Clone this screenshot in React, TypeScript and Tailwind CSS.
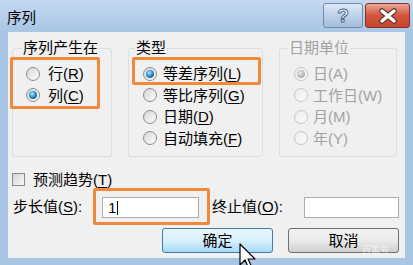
import React from 'react';

const font = "font-['Liberation_Sans','Noto_Sans_CJK_SC',sans-serif]";

function Radio({ checked, disabled }: { checked?: boolean; disabled?: boolean }) {
  return (
    <span
      className={
        disabled
          ? 'w-[14px] h-[14px] rounded-full border border-[#c6c6c6] bg-linear-to-br from-[#ececec] to-[#fbfbfb] flex items-center justify-center shrink-0'
          : 'w-[14px] h-[14px] rounded-full border border-[#8b8b8b] bg-linear-to-br from-[#d6d6d6] to-[#fdfdfd] flex items-center justify-center shrink-0'
      }
    >
      {checked && (
        <span
          className={
            disabled
              ? 'w-[8px] h-[8px] rounded-full bg-[radial-gradient(circle_at_40%_35%,#e8e8e8_0%,#b4b4b4_60%,#9a9a9a_100%)]'
              : 'w-[8px] h-[8px] rounded-full bg-[radial-gradient(circle_at_40%_35%,#b8e8ff_0%,#2c92d6_45%,#0a3a66_100%)]'
          }
        />
      )}
    </span>
  );
}

function Label({ text, k, disabled }: { text: string; k: string; disabled?: boolean }) {
  return (
    <span className={disabled ? 'text-[#a2a2a2] leading-none' : 'text-black leading-none'}>
      {text}(
      {disabled ? k : <span className="underline underline-offset-2">{k}</span>})
    </span>
  );
}

function Group({ title, titleLeft, width, pl, children }: {
  title: string; titleLeft: string; width: string; pl: string; children: React.ReactNode;
}) {
  return (
    <div className={`relative h-[109px] border border-[#d5dfe5] rounded-[3px] pt-[14px] ${width} ${pl}`}>
      <span className={`absolute -top-[10px] ${titleLeft} px-[1px] bg-[#f0f0f0] leading-[18px] ${title === '日期单位' ? 'text-[#a2a2a2]' : 'text-black'}`}>
        {title}
      </span>
      <div className="flex flex-col">{children}</div>
    </div>
  );
}

function Row({ children, gap }: { children: React.ReactNode; gap: string }) {
  return <div className={`h-[21.5px] flex items-center ${gap}`}>{children}</div>;
}

export default function App() {
  return (
    <div className={`relative w-[413px] h-[265px] bg-[#a9c5e4] flex flex-col text-[15px] ${font}`}>
      {/* 标题栏 */}
      <div className="h-[32px] flex items-start bg-linear-to-b from-[#c4d9f0] to-[#a9c5e5]">
        <span className="ml-[7px] mt-[9px] text-[14.5px] leading-[18px] text-black">序列</span>
        <div className="ml-auto mr-[3px] mt-[3px] flex gap-[2px]">
          <button className="w-[40px] h-[25px] rounded-[3px] border border-[#6f8bab] bg-linear-to-b from-[#dde9f6] via-[#bdd1e8] to-[#a5bedd] flex items-center justify-center">
            <span className="text-white font-bold text-[19px] leading-none [-webkit-text-stroke:1px_#4a6790]">?</span>
          </button>
          <button className="w-[45px] h-[25px] rounded-[3px] border border-[#8a2f22] bg-linear-to-b from-[#e9a596] via-[#d0563f] to-[#c4432c] flex items-center justify-center">
            <svg width="20" height="16" viewBox="0 0 20 16">
              <path d="M4 3 L16 13 M16 3 L4 13" stroke="#5a2a22" strokeWidth="5.5" strokeLinecap="round" />
              <path d="M4 3 L16 13 M16 3 L4 13" stroke="#ffffff" strokeWidth="3.5" strokeLinecap="round" />
            </svg>
          </button>
        </div>
      </div>

      {/* 客户区 */}
      <div className="mx-[8px] h-[226px] bg-[#f0f0f0] flex flex-col pl-[4px] pr-[6px]">
        <div className="mt-[16px] flex gap-[16px]">
          <Group title="序列产生在" titleLeft="left-[9px]" width="w-[100px]" pl="pl-[13px]">
            <Row gap="gap-[8px]"><Radio /><Label text="行" k="R" /></Row>
            <Row gap="gap-[8px]"><Radio checked /><Label text="列" k="C" /></Row>
          </Group>
          <Group title="类型" titleLeft="left-[6px]" width="w-[135px]" pl="pl-[14px]">
            <Row gap="gap-[6px]"><Radio checked /><Label text="等差序列" k="L" /></Row>
            <Row gap="gap-[6px]"><Radio /><Label text="等比序列" k="G" /></Row>
            <Row gap="gap-[6px]"><Radio /><Label text="日期" k="D" /></Row>
            <Row gap="gap-[6px]"><Radio /><Label text="自动填充" k="F" /></Row>
          </Group>
          <Group title="日期单位" titleLeft="left-[8px]" width="w-[118px]" pl="pl-[14px]">
            <Row gap="gap-[5px]"><Radio checked disabled /><Label text="日" k="A" disabled /></Row>
            <Row gap="gap-[5px]"><Radio disabled /><Label text="工作日" k="W" disabled /></Row>
            <Row gap="gap-[5px]"><Radio disabled /><Label text="月" k="M" disabled /></Row>
            <Row gap="gap-[5px]"><Radio disabled /><Label text="年" k="Y" disabled /></Row>
          </Group>
        </div>

        {/* 预测趋势 */}
        <div className="mt-[16px] h-[13px] flex items-center gap-[8px]">
          <span className="w-[13px] h-[13px] border border-[#8b8b8b] bg-linear-to-br from-[#d4d4d4] to-[#f8f8f8] shrink-0" />
          <Label text="预测趋势" k="T" />
        </div>

        {/* 步长值 / 终止值 */}
        <div className="mt-[11px] h-[21px] flex items-center">
          <span className="w-[90px] pl-[1px]"><Label text="步长值" k="S" />:</span>
          <div className="w-[97px] h-[21px] border border-[#abadb3] bg-white flex items-center pl-[5px]">
            <span className="leading-none text-black">1</span>
            <span className="w-[1px] h-[14px] bg-black ml-[1px]" />
          </div>
          <span className="ml-[13px] w-[92px]"><Label text="终止值" k="O" />:</span>
          <div className="w-[95px] h-[21px] border border-[#abadb3] bg-white" />
        </div>

        {/* 按钮 */}
        <div className="mt-[10px] flex justify-end gap-[15px]">
          <button className="w-[111px] h-[25px] rounded-[3px] border border-[#3c7fb1] bg-linear-to-b from-[#eaf6fd] via-[#d9f0fc] to-[#a7d9f5] leading-none text-black">
            确定
          </button>
          <button className="w-[111px] h-[25px] rounded-[3px] border border-[#707070] bg-linear-to-b from-[#f2f2f2] via-[#ebebeb] to-[#cfcfcf] leading-none text-black">
            取消
          </button>
        </div>
      </div>

      {/* 橙色标注框 */}
      <div className="absolute left-[10px] top-[57px] w-[90px] h-[52px] border-[3px] border-[#f0893c] rounded-[2px]" />
      <div className="absolute left-[132px] top-[57px] w-[129px] h-[28px] border-[3px] border-[#f0893c] rounded-[2px]" />
      <div className="absolute left-[93px] top-[188px] w-[117px] h-[37px] border-[3px] border-[#f0893c] rounded-[2px]" />

      {/* 水印 */}
      <span className="absolute left-[362px] top-[246px] text-[9px] leading-none text-white/70">百家号</span>

      {/* 鼠标指针 */}
      <svg className="absolute left-[239px] top-[243px]" width="18" height="27" viewBox="0 0 18 27">
        <path d="M1 1 L1 22 L6 17 L10 26 L13 24.5 L9 16 L16 16 Z" fill="#ffffff" stroke="#000000" strokeWidth="1.2" strokeLinejoin="round" />
      </svg>
    </div>
  );
}
